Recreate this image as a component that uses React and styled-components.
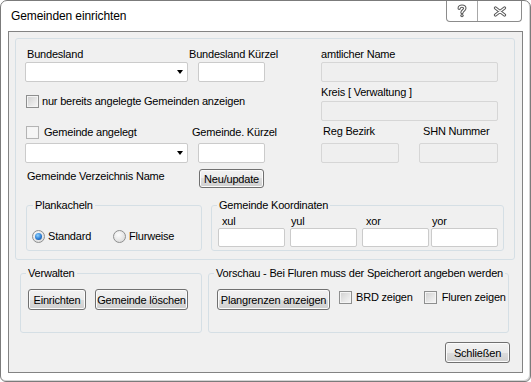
import React from 'react';
import styled, { createGlobalStyle } from 'styled-components';

const GlobalStyle = createGlobalStyle`
  body {
    margin: 0;
    background: #fff;
    font-family: "Liberation Sans", Arial, sans-serif;
  }
`;

const Window = styled.div`
  width: 531px;
  height: 382px;
  box-sizing: border-box;
  border: 1px solid #7b7b7b;
  border-radius: 7px 7px 6px 6px;
  background: #fff;
  display: flex;
  flex-direction: column;
  overflow: hidden;
  box-shadow: inset -1px -1px 0 #d4d4d4;
  letter-spacing: -0.2px;
`;

const TitleBar = styled.div`
  height: 30px;
  flex: none;
  display: flex;
  align-items: flex-start;
  padding: 0 8px 0 10px;
`;

const Title = styled.div`
  margin-top: 8px;
  font-size: 12px;
  line-height: 15px;
  letter-spacing: -0.1px;
  color: #000;
`;

const TitleButtons = styled.div`
  margin-left: auto;
  display: flex;
  height: 20px;
  border: 1px solid #8c8c8c;
  border-top: none;
  border-radius: 0 0 4px 4px;
`;

const TitleButton = styled.div`
  width: ${p => p.$w}px;
  display: flex;
  align-items: center;
  justify-content: center;
  & + & {
    border-left: 1px solid #a8a8a8;
  }
`;

const Client = styled.div`
  margin: 0 7px;
  height: 342px;
  box-sizing: border-box;
  border: 1px solid #838383;
  background: #f0f0f0;
  display: flex;
  flex-direction: column;
`;

const MainGroup = styled.div`
  margin: 6px 0 0 6px;
  width: 500px;
  height: 222px;
  box-sizing: border-box;
  border: 1px solid #d5dfe5;
  border-radius: 3px;
  padding: 8px 0 0 9px;
`;

const TopSection = styled.div`
  display: flex;
  gap: 56px;
`;

const Pane = styled.div`
  width: ${p => p.$w}px;
  display: flex;
  flex-direction: column;
`;

const Row = styled.div`
  display: flex;
  align-items: ${p => p.$align || 'flex-start'};
  margin-top: ${p => p.$mt || 0}px;
  margin-left: ${p => p.$ml || 0}px;
`;

const Cell = styled.div`
  width: ${p => p.$w}px;
  flex: none;
  display: flex;
  align-items: center;
`;

const Label = styled.span`
  font-size: 11px;
  line-height: ${p => p.$lh || 14}px;
  margin-left: ${p => p.$ml || 0}px;
  margin-top: ${p => p.$mt || 0}px;
  color: #000;
  white-space: nowrap;
`;

const TextBox = styled.div`
  width: ${p => p.$w}px;
  height: ${p => p.$h || 20}px;
  margin-left: ${p => p.$ml || 0}px;
  margin-top: ${p => p.$mt || 0}px;
  box-sizing: border-box;
  border: 1px solid ${p => (p.$disabled ? '#d6d6d6' : '#cbcbcb')};
  border-radius: 2px;
  background: ${p => (p.$disabled ? '#efefef' : '#fff')};
  flex: none;
`;

const Combo = styled(TextBox)`
  position: relative;
  &::after {
    content: '';
    position: absolute;
    right: 4px;
    top: 7px;
    border-left: 3.5px solid transparent;
    border-right: 3.5px solid transparent;
    border-top: 4px solid #000;
  }
`;

const CheckBox = styled.span`
  width: 13px;
  height: 13px;
  box-sizing: border-box;
  flex: none;
  margin-left: ${p => p.$ml || 0}px;
  margin-top: ${p => p.$mt || 0}px;
  border: 1px solid ${p => (p.$flat ? '#b4b4b4' : '#8e8f8f')};
  background: ${p =>
    p.$flat
      ? '#f6f6f6'
      : 'linear-gradient(135deg, #cfcfcf 0%, #e8e8e8 60%, #f7f7f7 100%)'};
  box-shadow: inset 0 0 0 1px #f4f4f4;
`;

const Radio = styled.span`
  width: 13px;
  height: 13px;
  box-sizing: border-box;
  flex: none;
  border-radius: 50%;
  border: 1px solid #8e8f8f;
  background: radial-gradient(circle at 40% 35%, #fcfcfc 0%, #dcdcdc 80%);
  display: flex;
  align-items: center;
  justify-content: center;
  &::after {
    content: '';
    display: ${p => (p.$checked ? 'block' : 'none')};
    width: 7px;
    height: 7px;
    border-radius: 50%;
    background: radial-gradient(circle at 40% 35%, #8fd3ff 0%, #2b7cd3 55%, #123e7a 100%);
  }
`;

const Button = styled.button`
  width: ${p => p.$w}px;
  height: ${p => p.$h || 21}px;
  margin-left: ${p => p.$ml || 0}px;
  flex: none;
  padding: 0;
  box-sizing: border-box;
  border: 1px solid #707070;
  border-radius: 3px;
  background: linear-gradient(#f2f2f2 0%, #ebebeb 50%, #dddddd 50%, #cfcfcf 100%);
  box-shadow: inset 0 0 0 1px #fbfbfb;
  font-family: "Liberation Sans", Arial, sans-serif;
  font-size: 11px;
  letter-spacing: -0.2px;
  white-space: nowrap;
  color: #000;
`;

const Group = styled.fieldset`
  margin: 0;
  padding: 0;
  min-width: 0;
  width: ${p => p.$w}px;
  height: ${p => p.$h}px;
  box-sizing: border-box;
  border: 1px solid #d5dfe5;
  border-radius: 3px;
  flex: none;
`;

const Caption = styled.legend`
  margin-left: ${p => p.$ml || 5}px;
  padding: 0 2px;
  font-size: 11px;
  line-height: 13px;
  white-space: nowrap;
  color: #000;
`;

const GroupRow = styled.div`
  display: flex;
  align-items: flex-start;
  margin-top: ${p => p.$mt || 0}px;
  padding-left: ${p => p.$pl || 0}px;
`;

const BottomSection = styled.div`
  display: flex;
  gap: 9px;
  margin: 11px 0 0 1px;
`;

const ToolsRow = styled.div`
  display: flex;
  gap: 6px;
  margin: 7px 0 0 11px;
`;

const RadioItem = styled.div`
  width: ${p => p.$w}px;
  display: flex;
  align-items: center;
  gap: 3px;
`;

const CoordCol = styled.div`
  display: flex;
  flex-direction: column;
  margin-left: ${p => p.$ml}px;
`;

const Footer = styled.div`
  display: flex;
  justify-content: flex-end;
  margin: 9px 12px 0 0;
`;

function HelpIcon() {
  const d = 'M3.2 4.2 C3.2 1.4, 8.8 1.4, 8.8 4.3 C8.8 6.4, 6 6.4, 6 8.6';
  return (
    <svg width="12" height="14" viewBox="0 0 12 14">
      <path d={d} fill="none" stroke="#5a5a5a" strokeWidth="3.4" strokeLinecap="round" />
      <circle cx="6" cy="11.6" r="1.7" fill="#5a5a5a" />
      <path d={d} fill="none" stroke="#fff" strokeWidth="1.3" strokeLinecap="round" />
      <circle cx="6" cy="11.6" r="0.6" fill="#fff" />
    </svg>
  );
}

function CloseIcon() {
  const d = 'M2.5 2 L11.5 9 M11.5 2 L2.5 9';
  return (
    <svg width="14" height="11" viewBox="0 0 14 11">
      <path d={d} stroke="#5a5a5a" strokeWidth="3.2" strokeLinecap="round" />
      <path d={d} stroke="#fff" strokeWidth="1.2" strokeLinecap="round" />
    </svg>
  );
}

function Coord({ label, ml, indent }) {
  return (
    <CoordCol $ml={ml}>
      <Label $lh={13} $ml={indent}>{label}</Label>
      <TextBox $w={67} $h={19} />
    </CoordCol>
  );
}

export default function App() {
  return (
    <>
      <GlobalStyle />
      <Window>
        <TitleBar>
          <Title>Gemeinden einrichten</Title>
          <TitleButtons>
            <TitleButton $w={30}><HelpIcon /></TitleButton>
            <TitleButton $w={43}><CloseIcon /></TitleButton>
          </TitleButtons>
        </TitleBar>
        <Client>
          <MainGroup>
            <TopSection>
              <Pane $w={240}>
                <Row>
                  <Cell $w={163}><Label $ml={2}>Bundesland</Label></Cell>
                  <Label $ml={1}>Bundesland Kürzel</Label>
                </Row>
                <Row $mt={1}>
                  <Combo $w={163} />
                  <TextBox $w={67} $ml={10} />
                </Row>
                <Row $mt={13} $align="center">
                  <CheckBox $ml={1} />
                  <Label $lh={13} $ml={3}>nur bereits angelegte Gemeinden anzeigen</Label>
                </Row>
                <Row $mt={18} $align="center">
                  <Cell $w={163}>
                    <CheckBox $ml={1} $flat />
                    <Label $lh={13} $ml={5}>Gemeinde angelegt</Label>
                  </Cell>
                  <Label $lh={13} $ml={4}>Gemeinde. Kürzel</Label>
                </Row>
                <Row $mt={4}>
                  <Combo $w={163} />
                  <TextBox $w={67} $ml={10} />
                </Row>
                <Row $mt={6}>
                  <Cell $w={163}><Label $ml={2}>Gemeinde Verzeichnis Name</Label></Cell>
                  <Button $w={65} $h={19} $ml={11}>Neu/update</Button>
                </Row>
              </Pane>
              <Pane $w={177}>
                <Label>amtlicher Name</Label>
                <TextBox $w={177} $mt={1} $disabled />
                <Label $mt={3}>Kreis [ Verwaltung ]</Label>
                <TextBox $w={177} $mt={2} $disabled />
                <Row $mt={3}>
                  <Cell $w={98}><Label $ml={2}>Reg Bezirk</Label></Cell>
                  <Label $ml={4}>SHN Nummer</Label>
                </Row>
                <Row $mt={5}>
                  <TextBox $w={78} $disabled />
                  <TextBox $w={79} $ml={20} $disabled />
                </Row>
              </Pane>
            </TopSection>
            <BottomSection>
              <Group $w={176} $h={52}>
                <Caption $ml={6}>Plankacheln</Caption>
                <GroupRow $mt={18} $pl={5}>
                  <RadioItem $w={81}>
                    <Radio $checked />
                    <Label $lh={13}>Standard</Label>
                  </RadioItem>
                  <RadioItem $w={80}>
                    <Radio />
                    <Label $lh={13}>Flurweise</Label>
                  </RadioItem>
                </GroupRow>
              </Group>
              <Group $w={293} $h={52}>
                <Caption $ml={5}>Gemeinde Koordinaten</Caption>
                <GroupRow $mt={3}>
                  <Coord label="xul" ml={6} indent={4} />
                  <Coord label="yul" ml={5} indent={1} />
                  <Coord label="xor" ml={5} indent={4} />
                  <Coord label="yor" ml={2} indent={1} />
                </GroupRow>
              </Group>
            </BottomSection>
          </MainGroup>
          <ToolsRow>
            <Group $w={182} $h={66}>
              <Caption>Verwalten</Caption>
              <GroupRow $mt={9} $pl={7}>
                <Button $w={58}>Einrichten</Button>
                <Button $w={93} $ml={9}>Gemeinde löschen</Button>
              </GroupRow>
            </Group>
            <Group $w={301} $h={66}>
              <Caption>Vorschau - Bei Fluren muss der Speicherort angeben werden</Caption>
              <GroupRow $mt={9} $pl={8}>
                <Button $w={113}>Plangrenzen anzeigen</Button>
                <CheckBox $ml={9} $mt={2} />
                <Label $ml={4} $mt={1}>BRD zeigen</Label>
                <CheckBox $ml={11} $mt={2} />
                <Label $ml={5} $mt={1}>Fluren zeigen</Label>
              </GroupRow>
            </Group>
          </ToolsRow>
          <Footer>
            <Button $w={65}>Schließen</Button>
          </Footer>
        </Client>
      </Window>
    </>
  );
}
